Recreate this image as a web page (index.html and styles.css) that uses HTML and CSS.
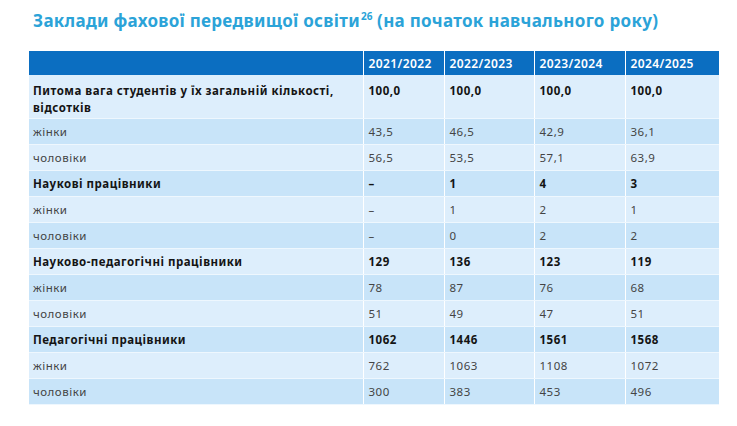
FILE: index.html
```html
<!DOCTYPE html>
<html lang="uk">
<head>
<meta charset="utf-8">
<link rel="stylesheet" href="styles.css">
</head>
<body>
<div class="page">
  <h1 class="title">Заклади фахової передвищої освіти<sup>26</sup> (на початок навчального року)</h1>
  <table class="data">
    <colgroup>
      <col class="c-label"><col class="c1"><col class="c2"><col class="c3"><col class="c4">
    </colgroup>
    <thead>
      <tr><th></th><th>2021/2022</th><th>2022/2023</th><th>2023/2024</th><th>2024/2025</th></tr>
    </thead>
    <tbody>
      <tr class="light tall bold"><td>Питома вага студентів у їх загальній кількості, відсотків</td><td>100,0</td><td>100,0</td><td>100,0</td><td>100,0</td></tr>
      <tr class="dark"><td>жінки</td><td>43,5</td><td>46,5</td><td>42,9</td><td>36,1</td></tr>
      <tr class="light"><td>чоловіки</td><td>56,5</td><td>53,5</td><td>57,1</td><td>63,9</td></tr>
      <tr class="dark bold"><td>Наукові працівники</td><td>–</td><td>1</td><td>4</td><td>3</td></tr>
      <tr class="light"><td>жінки</td><td>–</td><td>1</td><td>2</td><td>1</td></tr>
      <tr class="dark"><td>чоловіки</td><td>–</td><td>0</td><td>2</td><td>2</td></tr>
      <tr class="light bold"><td>Науково-педагогічні працівники</td><td>129</td><td>136</td><td>123</td><td>119</td></tr>
      <tr class="dark"><td>жінки</td><td>78</td><td>87</td><td>76</td><td>68</td></tr>
      <tr class="light"><td>чоловіки</td><td>51</td><td>49</td><td>47</td><td>51</td></tr>
      <tr class="dark bold"><td>Педагогічні працівники</td><td>1062</td><td>1446</td><td>1561</td><td>1568</td></tr>
      <tr class="light"><td>жінки</td><td>762</td><td>1063</td><td>1108</td><td>1072</td></tr>
      <tr class="dark"><td>чоловіки</td><td>300</td><td>383</td><td>453</td><td>496</td></tr>
    </tbody>
  </table>
</div>
</body>
</html>
```

FILE: styles.css
```css
html, body {
  margin: 0;
  padding: 0;
  background: #ffffff;
}

.page {
  padding: 10px 0 0 29px;
  font-family: "Noto Sans", "Open Sans", sans-serif;
}

.title {
  margin: 0 0 19px 4px;
  font-size: 17px;
  line-height: 22px;
  font-weight: 700;
  color: #2ba3d8;
  letter-spacing: 0.3px;
  white-space: nowrap;
}

.title sup {
  font-size: 10px;
  line-height: 0;
  vertical-align: 7px;
  margin-left: 1px;
  letter-spacing: 0;
}

.data {
  border-collapse: collapse;
  table-layout: fixed;
  width: 690px;
  font-size: 11.5px;
  letter-spacing: 0.5px;
}

.c-label { width: 334px; }
.c1 { width: 81px; }
.c2 { width: 90px; }
.c3 { width: 91px; }
.c4 { width: 94px; }

.data th,
.data td {
  border: 1px solid #ffffff;
  border-top: 0;
  border-bottom: 1px solid #eef7fe;
  padding: 0 5px;
  text-align: left;
  vertical-align: middle;
}

.data tr > :first-child { border-left: 0; padding-left: 4px; }
.data tr > :last-child { border-right: 0; }

.data thead th {
  background: #0b6ec1;
  color: #ffffff;
  font-weight: 600;
  font-size: 12px;
  letter-spacing: 0.4px;
  height: 24px;
  border-bottom: 0;
}

.data td {
  height: 25px;
  color: #444444;
  font-weight: 400;
}

.data tr.light td { background: #ddeefc; }
.data tr.dark td { background: #c8e4f9; }

.data tr.bold td {
  font-weight: 700;
  color: #141414;
}

.data tr.tall td {
  height: 43px;
  vertical-align: top;
  padding-top: 7px;
  line-height: 17px;
  box-sizing: border-box;
}
```
